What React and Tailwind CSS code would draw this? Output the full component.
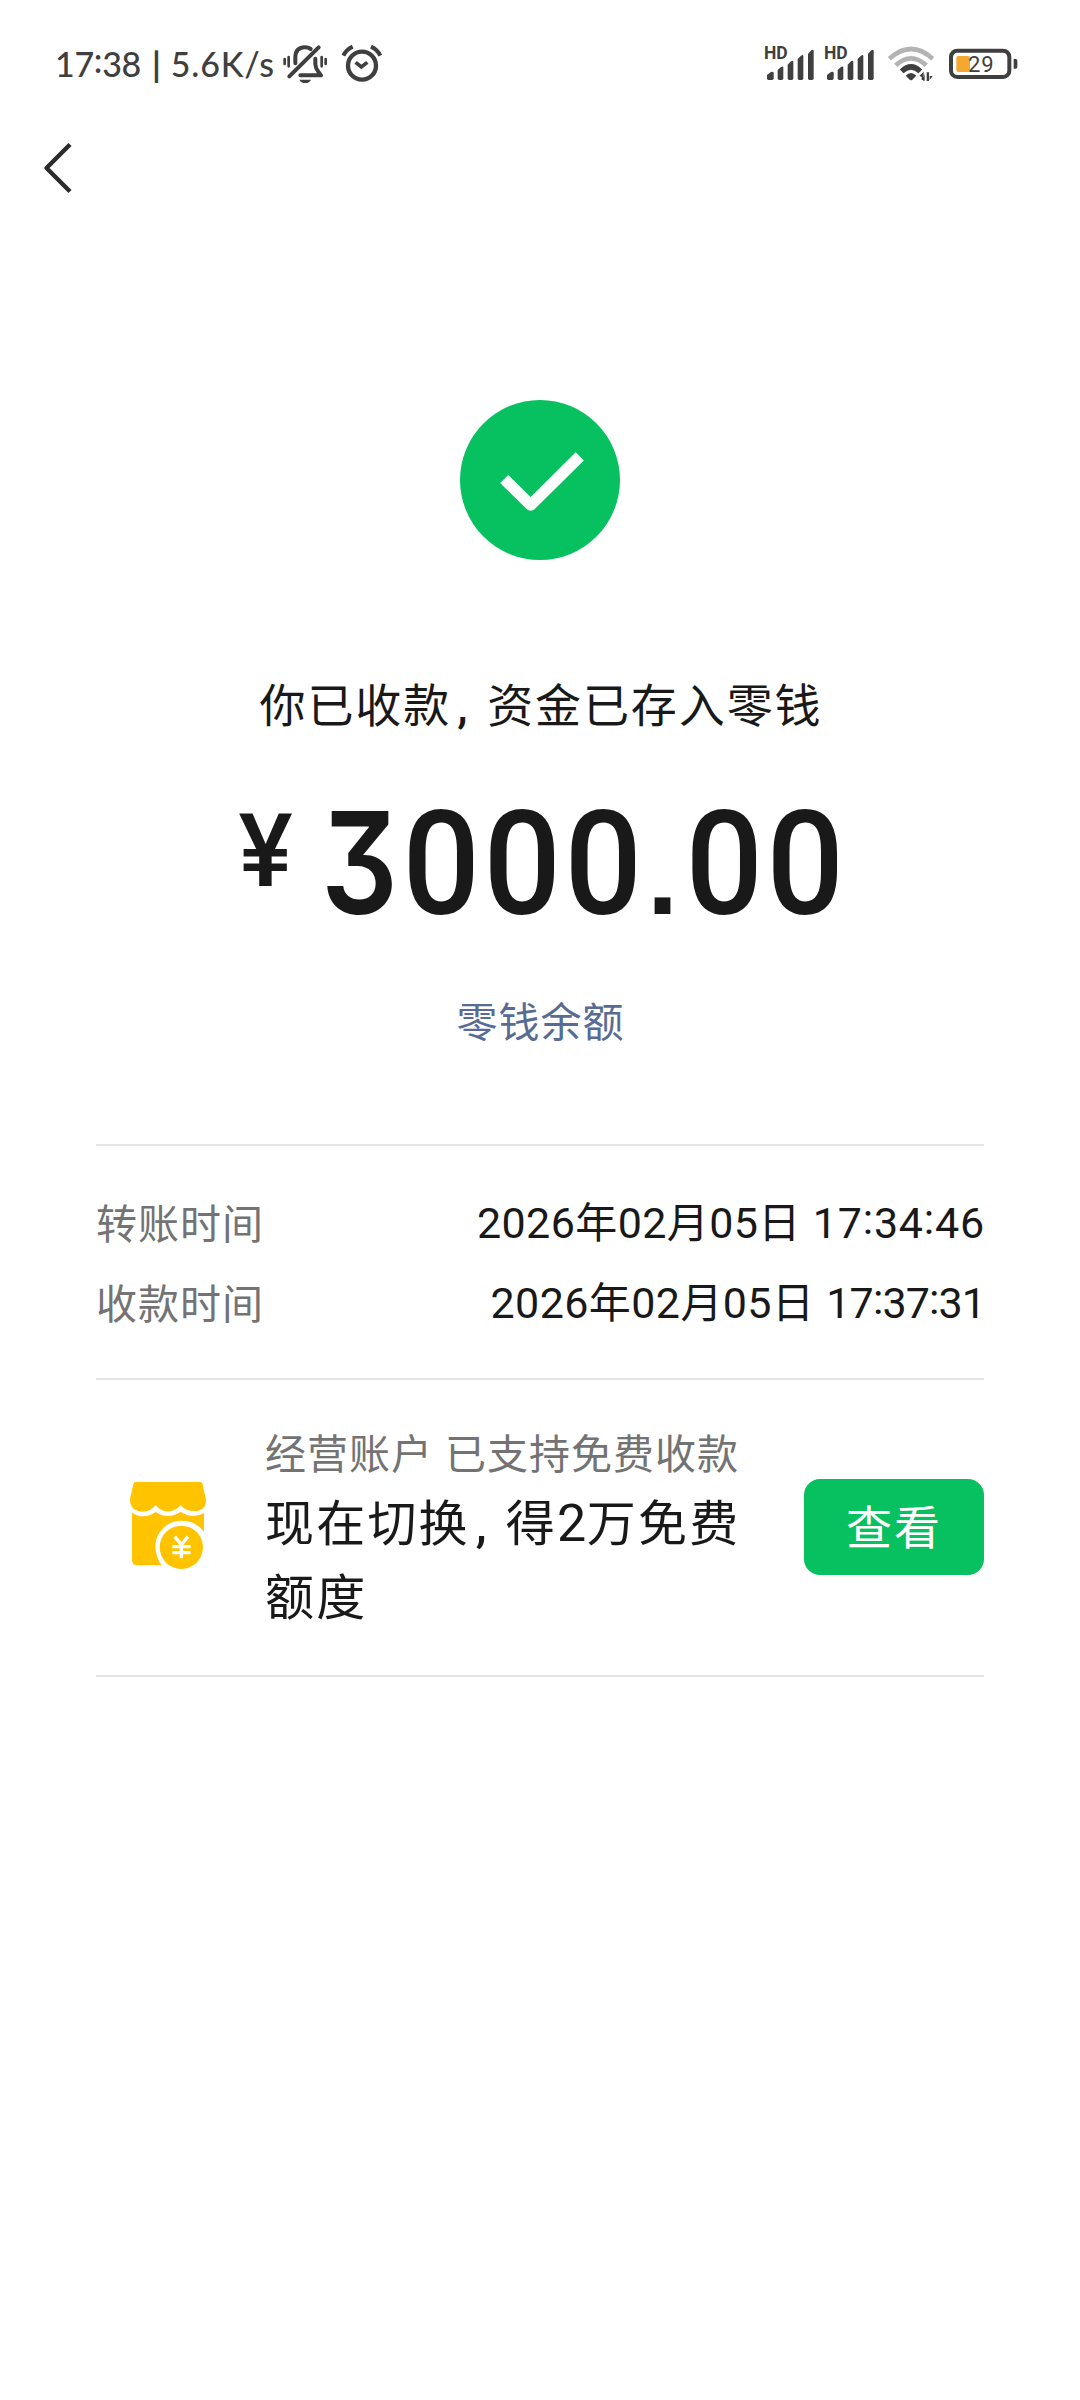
import React from 'react';

const BARS = [
  'M83 132 L95 123 Q103 121 103 126 V142 Q103 147 98 147 H88 Q83 147 83 142 Z',
  'M115 117 L125 108 Q132 104 132 110 V142 Q132 147 127 147 H120 Q115 147 115 142 Z',
  'M145 101 L155 91 Q162 86 162 93 V142 Q162 147 157 147 H150 Q145 147 145 142 Z',
  'M175 84 L185 74 Q192 69 192 76 V142 Q192 147 187 147 H180 Q175 147 175 142 Z',
  'M206 69 L216 58 Q223 53 223 60 V142 Q223 147 218 147 H211 Q206 147 206 142 Z'
];

const MutedBell = () => (
  <svg viewBox="752 40 144 120" className="w-[48px] h-[40px]" fill="none" stroke="#3f3f3f" strokeWidth="9" strokeLinecap="round">
    <path d="M763 85 V100 M775 79 V107" strokeWidth="8" />
    <path d="M886 85 V100 M874 79 V107" strokeWidth="8" />
    <path d="M795 98 V79 Q796 50 824 50 Q834 50 841 55" strokeWidth="12" />
    <path d="M777 137 L865 50" strokeWidth="12" />
    <path d="M855 84 V101 Q856 113 864 123 L872 134 H810" strokeWidth="12" strokeLinejoin="round" />
    <path d="M807 147 H842 Q837 157 825 157 Q812 157 807 147 Z" fill="#3f3f3f" stroke="none" />
  </svg>
);

const Alarm = () => (
  <svg viewBox="932 36 126 126" className="w-[42px] h-[42px]" fill="none" stroke="#3f3f3f" strokeWidth="13">
    <circle cx="995" cy="104" r="42" />
    <path d="M939 74 Q948 56 967 47 M1050 74 Q1041 56 1022 47" strokeWidth="12" />
    <path d="M976 94 L993 108 L1011 94" strokeWidth="11" />
  </svg>
);

const Signal = () => (
  <div className="relative w-[50px] h-[34px]">
    <svg viewBox="77 48 150 102" className="w-[50px] h-[34px]" fill="#3f3f3f">
      {BARS.map((d, i) => <path key={i} d={d} />)}
    </svg>
    <span className="absolute -left-px -top-[2px] text-[17.5px] leading-[17px] font-bold">HD</span>
  </div>
);

const Wifi = () => (
  <svg viewBox="441 45 144 114" className="w-[48px] h-[38px]" fill="none" strokeWidth="14">
    <path d="M448 86 Q513 28 578 86" stroke="#b3b3b3" />
    <path d="M467 106 Q513 64 559 106" stroke="#b3b3b3" />
    <path d="M485 124 Q513 97 541 124" stroke="#3f3f3f" strokeWidth="16" />
    <path d="M497 137 Q513 121 529 137 L517 149 Q513 152 509 149 Z" fill="#3f3f3f" />
    <path d="M538 138 L551 125 V150 H545 V140 Z M554 130 V152 H549 Z M560 127 H567 V153 H560 Z M569 125 V150 L578 138 H569 Z" fill="#3f3f3f" />
  </svg>
);

const Battery = () => (
  <div className="relative w-[69px] h-[32px]">
    <svg viewBox="626 51 207 96" className="w-[69px] h-[32px]">
      <rect x="632" y="59" width="175" height="79" rx="19" fill="none" stroke="#3f3f3f" strokeWidth="12" />
      <path d="M820 84 H826 Q831 84 831 90 V107 Q831 113 826 113 H820 Z" fill="#3f3f3f" />
      <rect x="648" y="75" width="41" height="48" rx="6" fill="#f5a82f" />
    </svg>
    <span className="absolute left-[19px] top-[5px] text-[22px] leading-[23px] tracking-[0.8px]">29</span>
  </div>
);

const ShopIcon = () => (
  <svg viewBox="57 62 234 270" className="w-[78px] h-[90px]">
    <path d="M77 65 H270 Q277 65 278 72 L288 118 Q288 152 252 152 Q226 152 212 134 Q196 153 174 153 Q152 153 137 134 Q122 154 97 154 Q60 152 60 116 L70 72 Q71 65 77 65 Z" fill="#ffc300" />
    <path d="M66 157 Q82 168 100 168 Q121 167 137 155 Q153 167 174 167 Q196 166 212 154 Q228 166 250 167 Q268 167 282 158 V214 Q257 181 215 181 Q174 181 150 214 Q126 250 143 293 Q147 305 155 315 H82 Q66 315 66 298 Z" fill="#ffc300" />
    <circle cx="214" cy="261" r="65" fill="#ffc300" />
    <path d="M194 229 L214 253 L234 229 M214 253 V294 M187 259 H242 M187 277 H242" fill="none" stroke="#fff" strokeWidth="10" />
  </svg>
);

const Comma = () => <span className="inline-block w-[36px] pl-[6px] tracking-normal font-medium">,</span>;

// colons sit centred on the digits
const Time = ({ value }) =>
  value.split(':').map((part, i) => (
    <React.Fragment key={i}>
      {i > 0 && <span className="relative -top-[0.09em]">:</span>}
      {part}
    </React.Fragment>
  ));

const Zero = () => <span className="inline-block w-[81px] leading-[100px] text-center scale-x-[0.94]">0</span>;

const TimeRow = ({ label, year, month, day, time, timeClass }) => (
  <div className="flex justify-between h-20 leading-[80px] text-[41px]">
    <span className="tracking-[1px] text-[#737373]">{label}</span>
    <span className="relative -top-[2px] left-px flex text-[43px] tracking-[0.4px]">
      {year}<span className="relative top-px text-[42px]">年</span>
      {month}<span className="relative top-px text-[42px]">月</span>
      {day}<span className="relative top-px text-[42px]">日</span>
      <span className={timeClass}><Time value={time} /></span>
    </span>
  </div>
);

export default function App() {
  return (
    <div className="w-[1080px] h-[2400px] bg-white text-[#191919] font-['Roboto','Noto_Sans_CJK_SC',sans-serif] overflow-hidden">
      <div className="flex items-center justify-between h-32 pl-[55px] pr-[62px] text-[#3f3f3f]">
        <div className="flex items-center">
          <span className="flex items-center w-[226px] pb-px text-[34px] leading-[40px] font-medium font-['Lato','Roboto',sans-serif]">
            <span className="tracking-[-0.3px]"><Time value="17:38" /></span>
            <span className="ml-[11px] mr-[10px] font-bold">|</span>
            <span className="tracking-[0.8px]">5.6K/s</span>
          </span>
          <MutedBell />
          <span className="ml-[12px]"><Alarm /></span>
        </div>
        <div className="flex items-center">
          <Signal />
          <span className="ml-[10px]"><Signal /></span>
          <span className="ml-[12px]"><Wifi /></span>
          <span className="ml-[14px]"><Battery /></span>
        </div>
      </div>

      <div className="flex items-center h-20 pl-[39px]">
        <svg viewBox="0 0 34 52" className="w-[34px] h-[52px]" fill="none" stroke="#2b2b2b" strokeWidth="4.4">
          <path d="M31 2.5 L7.5 26 L31 49.5" strokeLinejoin="round" />
        </svg>
      </div>

      <div className="flex flex-col items-center pt-48">
        <svg viewBox="20 20 160 160" className="w-40 h-40">
          <circle cx="100" cy="100" r="80" fill="#07c160" />
          <path d="M64.2 99 L90.7 125 L139.8 76.3" fill="none" stroke="#fff" strokeWidth="11.5" strokeLinejoin="round" />
        </svg>
        <p className="mt-[116px] pl-[2px] text-[46px] leading-[60px] tracking-[1.9px] whitespace-nowrap">你已收款<Comma />资金已存入零钱</p>
        <div className="flex items-start mt-14 h-[145px] pl-[3px] font-medium">
          <span className="mt-2 mr-[26px] text-[102px] leading-[102px]">¥</span>
          <span className="block text-[145px] leading-[145px] whitespace-nowrap">
            <span className="relative left-[2px] inline-block w-[81px] leading-[100px] font-['Inter',sans-serif] font-semibold text-[142px] origin-left scale-x-[0.85] [font-feature-settings:'cv09']">3</span>
            <Zero /><Zero /><Zero />
            <span className="inline-block w-[40px] text-center leading-[80px] text-[112px] font-bold font-['Liberation_Sans',sans-serif]">.</span>
            <Zero /><Zero />
          </span>
        </div>
        <a className="mt-14 pl-px text-[41px] leading-[60px] tracking-[1px] text-[#576b95]">零钱余额</a>
      </div>

      <div className="mx-24 mt-[91px]">
        <div className="border-t-2 border-[#e5e5e5] pt-[39px] pb-[33px]">
          <TimeRow label="转账时间" year="2026" month="02" day="05" time="17:34:46" timeClass="ml-[12px] tracking-[0.8px]" />
          <TimeRow label="收款时间" year="2026" month="02" day="05" time="17:37:31" timeClass="ml-[12px] tracking-[-0.9px]" />
        </div>

        <div className="flex items-start h-[299px] border-y-2 border-[#e5e5e5]">
          <div className="mt-[101px] ml-[33px]"><ShopIcon /></div>
          <div className="ml-[58px] mt-[45px] w-[490px]">
            <p className="flex text-[41px] leading-[60px] tracking-[1px] text-[#737373] whitespace-nowrap">
              <span>经营账户</span><span className="ml-[12px]">已支持免费收款</span>
            </p>
            <p className="mt-[3px] text-[49px] leading-[74px] tracking-[2.2px]">
              现在切换<Comma />得<span className="text-[52px] leading-none tracking-[0.5px]">2</span>万免费<br />额度
            </p>
          </div>
          <button className="ml-auto mt-[99px] w-[180px] h-24 rounded-[16px] bg-[#07c160] text-white text-[46px] leading-[98px] tracking-[2px]">查看</button>
        </div>
      </div>
    </div>
  );
}
